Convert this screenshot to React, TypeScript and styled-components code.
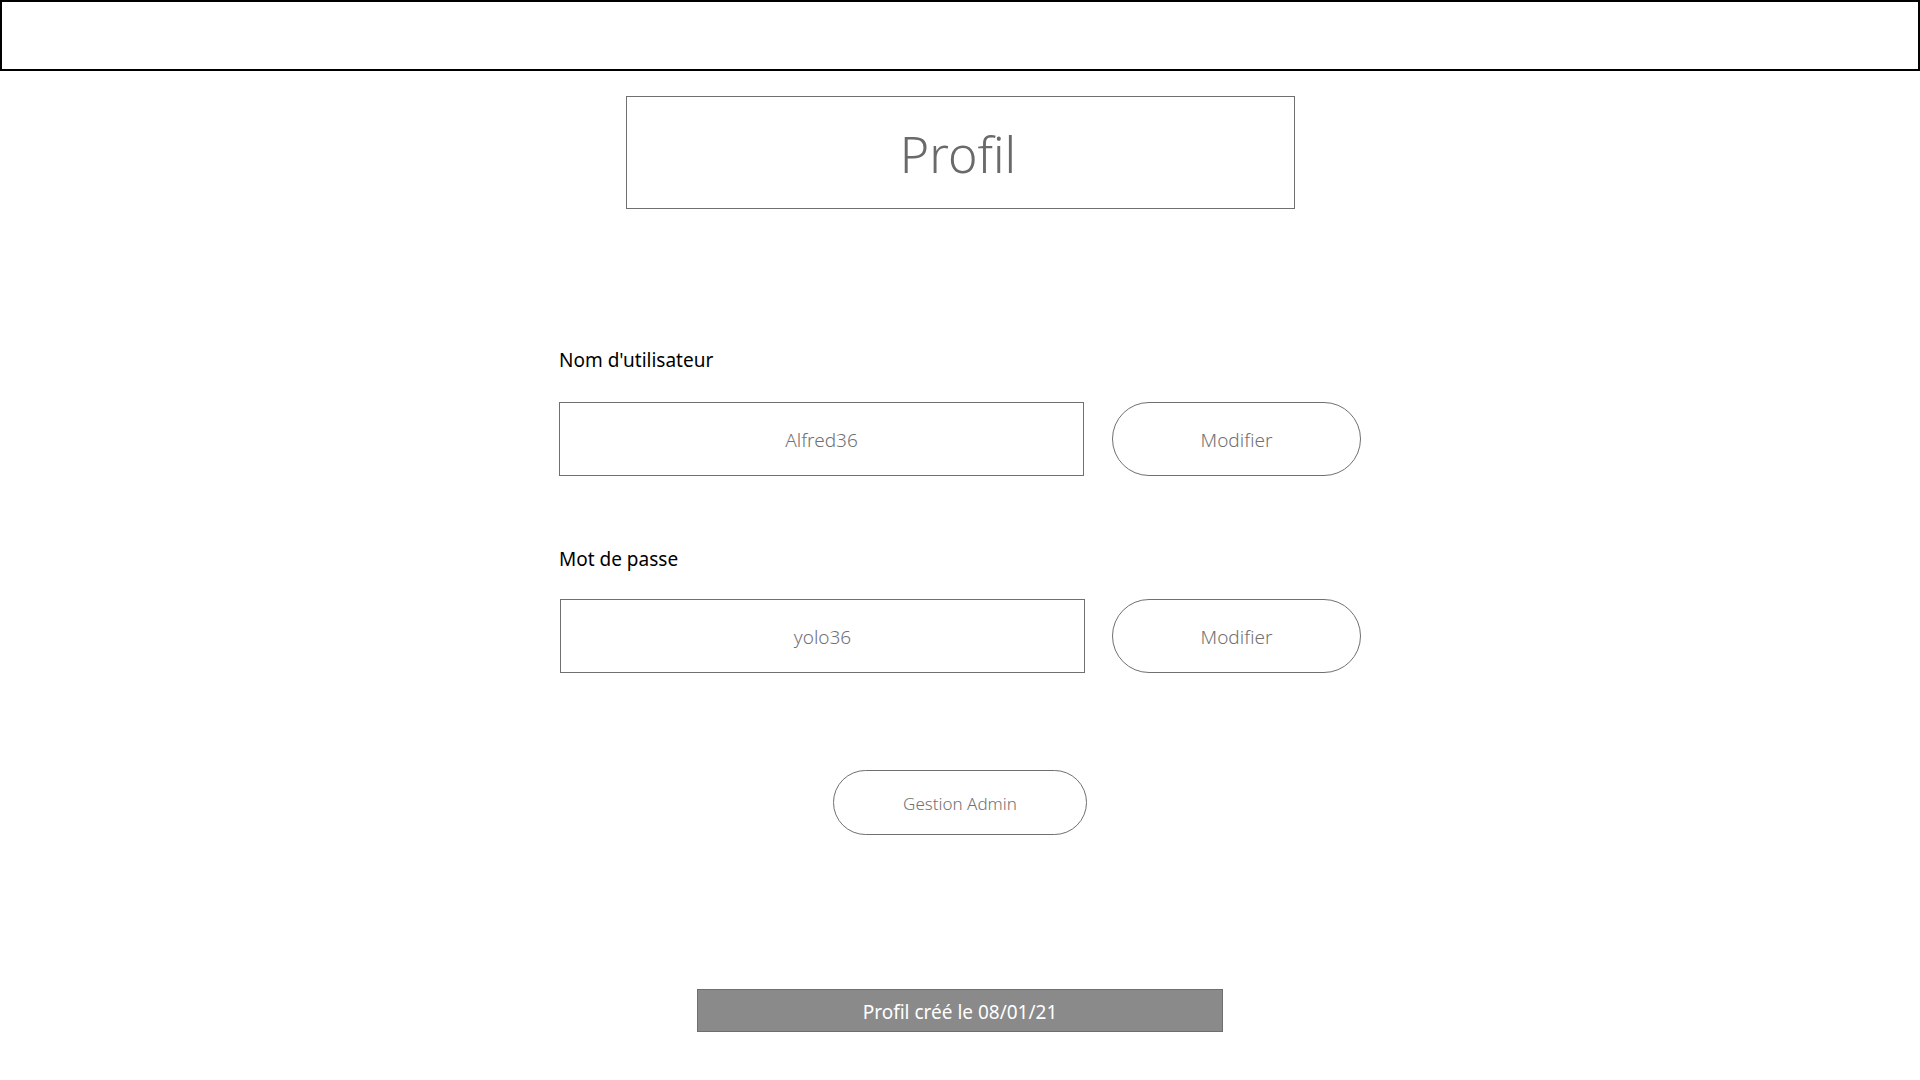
import React from "react";
import styled, { createGlobalStyle } from "styled-components";

const GlobalStyle = createGlobalStyle`
  html, body {
    margin: 0;
    padding: 0;
    background: #ffffff;
  }
  body {
    font-family: "Noto Sans", "Open Sans", sans-serif;
  }
  * { box-sizing: border-box; }
`;

const Page = styled.div`
  width: 1920px;
  min-height: 1080px;
  display: flex;
  flex-direction: column;
  align-items: center;
`;

const TopBar = styled.header`
  width: 100%;
  height: 71px;
  border: 2px solid #000000;
  flex-shrink: 0;
`;

const TitleBox = styled.div`
  margin-top: 25px;
  width: 669px;
  height: 113px;
  border: 1px solid #707070;
  display: flex;
  align-items: center;
  justify-content: center;
`;

const Title = styled.h1`
  margin: 0 4px 0 0;
  font-size: 50px;
  font-weight: 300;
  color: #6a6a6a;
  line-height: 1;
  padding-top: 2px;
`;

const Form = styled.div`
  width: 802px;
  display: flex;
  flex-direction: column;
`;

const Group = styled.section<{ $top: number }>`
  margin-top: ${(p) => p.$top}px;
  display: flex;
  flex-direction: column;
`;

const Label = styled.label<{ $gap: number }>`
  font-size: 19px;
  line-height: 28px;
  color: #000000;
  font-weight: 400;
  margin-bottom: ${(p) => p.$gap}px;
`;

const Row = styled.div`
  display: flex;
  gap: 28px;
`;

const Field = styled.div<{ $shift?: number }>`
  width: 525px;
  height: 74px;
  border: 1px solid #707070;
  margin-left: ${(p) => p.$shift || 0}px;
  margin-right: ${(p) => -(p.$shift || 0)}px;
  padding-top: 2px;
  display: flex;
  align-items: center;
  justify-content: center;
  font-size: 19px;
  font-weight: 350;
  color: #727272;
`;

const PillButton = styled.button<{ $w: number; $h: number; $size: number }>`
  width: ${(p) => p.$w}px;
  height: ${(p) => p.$h}px;
  border: 1px solid #707070;
  border-radius: 999px;
  background: #ffffff;
  font-family: "Noto Sans", "Open Sans", sans-serif;
  font-size: ${(p) => p.$size}px;
  font-weight: 350;
  color: #727272;
  padding: 2px 0 0;
  display: flex;
  align-items: center;
  justify-content: center;
`;

const AdminWrap = styled.div`
  margin-top: 97px;
  display: flex;
  justify-content: center;
`;

const Footer = styled.footer`
  margin-top: 154px;
  width: 526px;
  height: 43px;
  background: #8a8a8a;
  border: 1px solid #6f6f6f;
  color: #ffffff;
  font-size: 19px;
  padding-top: 3px;
  display: flex;
  align-items: center;
  justify-content: center;
`;

export default function App() {
  return (
    <>
      <GlobalStyle />
      <Page>
        <TopBar />
        <TitleBox>
          <Title>Profil</Title>
        </TitleBox>
        <Form>
          <Group $top={137}>
            <Label $gap={28}>Nom d'utilisateur</Label>
            <Row>
              <Field>Alfred36</Field>
              <PillButton $w={249} $h={74} $size={19}>
                Modifier
              </PillButton>
            </Row>
          </Group>
          <Group $top={69}>
            <Label $gap={26}>Mot de passe</Label>
            <Row>
              <Field $shift={1}>yolo36</Field>
              <PillButton $w={249} $h={74} $size={19}>
                Modifier
              </PillButton>
            </Row>
          </Group>
        </Form>
        <AdminWrap>
          <PillButton $w={254} $h={65} $size={17}>
            Gestion Admin
          </PillButton>
        </AdminWrap>
        <Footer>Profil créé le 08/01/21</Footer>
      </Page>
    </>
  );
}
